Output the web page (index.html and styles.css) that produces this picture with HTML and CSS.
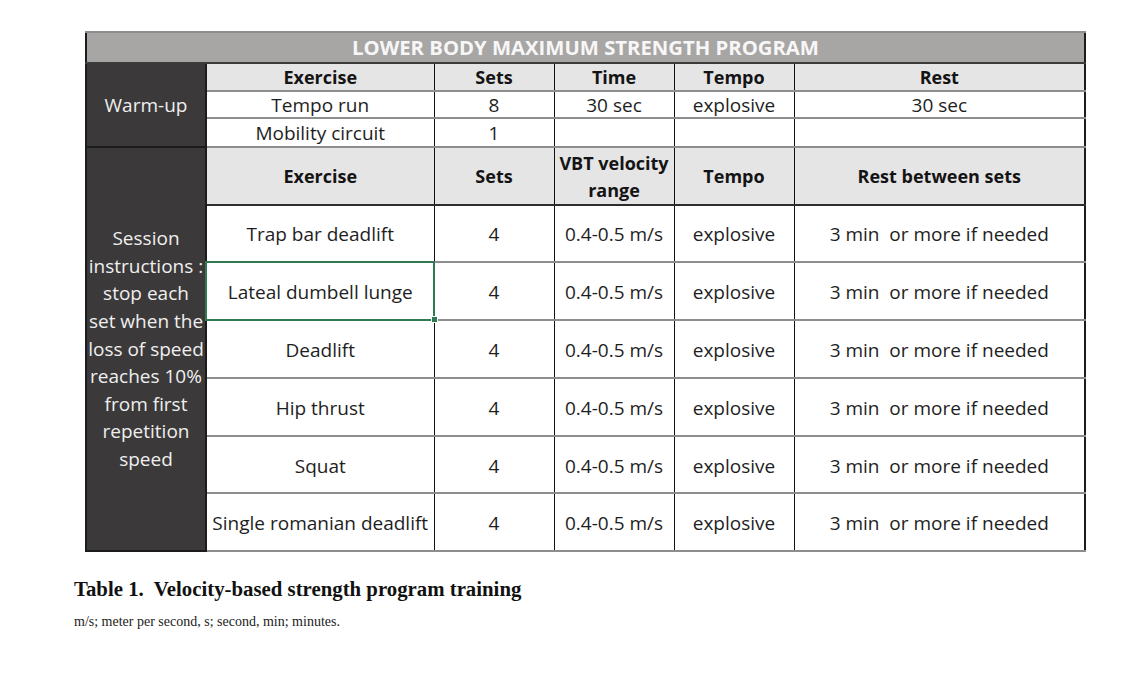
FILE: index.html
```html
<!DOCTYPE html>
<html lang="en">
<head>
<meta charset="utf-8">
<title>Table 1. Velocity-based strength program training</title>
<link rel="stylesheet" href="styles.css">
</head>
<body>
<div class="page">
  <table class="program">
    <colgroup>
      <col class="c-side"><col class="c-ex"><col class="c-sets"><col class="c-time"><col class="c-tempo"><col class="c-rest">
    </colgroup>
    <tr class="r-title"><td colspan="6" class="title">LOWER BODY MAXIMUM STRENGTH PROGRAM</td></tr>
    <tr class="r-head1">
      <td rowspan="3" class="side">Warm-up</td>
      <td class="hd">Exercise</td><td class="hd">Sets</td><td class="hd">Time</td><td class="hd">Tempo</td><td class="hd">Rest</td>
    </tr>
    <tr class="r-warm"><td>Tempo run</td><td>8</td><td>30 sec</td><td>explosive</td><td>30 sec</td></tr>
    <tr class="r-warm r-warm-last"><td>Mobility circuit</td><td>1</td><td></td><td></td><td></td></tr>
    <tr class="r-head2">
      <td rowspan="7" class="side side-session">Session<br>instructions :<br>stop each<br>set when the<br>loss of speed<br>reaches 10%<br>from first<br>repetition<br>speed</td>
      <td class="hd">Exercise</td><td class="hd">Sets</td><td class="hd">VBT velocity<br>range</td><td class="hd">Tempo</td><td class="hd">Rest between sets</td>
    </tr>
    <tr class="r-data"><td>Trap bar deadlift</td><td>4</td><td>0.4-0.5 m/s</td><td>explosive</td><td class="pre">3 min  or more if needed</td></tr>
    <tr class="r-data"><td class="selected">Lateal dumbell  lunge<span class="handle"></span></td><td>4</td><td>0.4-0.5 m/s</td><td>explosive</td><td class="pre">3 min  or more if needed</td></tr>
    <tr class="r-data"><td>Deadlift</td><td>4</td><td>0.4-0.5 m/s</td><td>explosive</td><td class="pre">3 min  or more if needed</td></tr>
    <tr class="r-data"><td>Hip thrust</td><td>4</td><td>0.4-0.5 m/s</td><td>explosive</td><td class="pre">3 min  or more if needed</td></tr>
    <tr class="r-data"><td>Squat</td><td>4</td><td>0.4-0.5 m/s</td><td>explosive</td><td class="pre">3 min  or more if needed</td></tr>
    <tr class="r-data r-last"><td>Single romanian deadlift</td><td>4</td><td>0.4-0.5 m/s</td><td>explosive</td><td class="pre">3 min  or more if needed</td></tr>
  </table>
  <p class="caption">Table 1.&nbsp; Velocity-based strength program training</p>
  <p class="note">m/s; meter per second, s; second, min; minutes.</p>
</div>
</body>
</html>
```
FILE: styles.css
```css
html, body {
  margin: 0;
  background: #ffffff;
}
.page {
  padding: 31px 0 0 85px;
  font-family: "Open Sans", Lato, "Liberation Sans", sans-serif;
}
.program {
  border-collapse: collapse;
  table-layout: fixed;
  width: 999px;
  border: 2px solid #1c1c1c;
  color: #1e1e1e;
  font-size: 19px;
}
.c-side { width: 120px; }
.c-ex { width: 228px; }
.c-sets { width: 120px; }
.c-time { width: 120px; }
.c-tempo { width: 120px; }
.c-rest { width: 291px; }

.program td {
  padding: 0;
  text-align: center;
  vertical-align: middle;
  border-left: 1px solid #111;
  border-right: 1px solid #111;
  border-top: 2px solid #8d8d8d;
  border-bottom: 2px solid #8d8d8d;
  line-height: 25px;
  white-space: nowrap;
}
.program td.pre { white-space: pre; }

.r-title { height: 31px; }
.title {
  background: #a8a6a5;
  color: #f7f7f7;
  font-weight: 700;
  font-size: 20.3px;
  border-bottom: 2px solid #3b3b3b !important;
}
.r-head1 { height: 28px; }
.r-warm { height: 27px; }
.r-warm td { line-height: 24px; padding-top: 1px; }
.r-warm-last { height: 28.5px; }
.r-head2 { height: 58px; }
.r-data { height: 57.8px; }
.r-data td { padding-top: 3px; }

.program td.hd {
  background: #e6e5e5;
  font-weight: 700;
  font-size: 18px;
  color: #141414;
}
.r-head2 td {
  border-top: 2px solid #2d2d2d;
  border-bottom: 2px solid #2d2d2d;
}
.r-head2 td.hd { line-height: 27px; padding-top: 2px; }

.program td.side {
  background: #3b3939;
  color: #efefef;
  border: 2px solid #1c1c1c;
  white-space: nowrap;
  padding-top: 1px;
}
.side-session { line-height: 27.6px !important; }

.selected {
  position: relative;
  outline: 2px solid #2f7a52;
  outline-offset: -1px;
}
.handle {
  position: absolute;
  right: -4px;
  bottom: -4px;
  width: 5px;
  height: 5px;
  background: #2f7a52;
  border: 1px solid #fff;
}

.caption {
  margin: 25px 0 0 -11px;
  font-family: "Liberation Serif", "DejaVu Serif", serif;
  font-weight: 700;
  font-size: 20.8px;
  color: #111;
}
.note {
  margin: 13px 0 0 -11px;
  font-family: "Liberation Serif", "DejaVu Serif", serif;
  font-size: 14px;
  color: #222;
}
```
